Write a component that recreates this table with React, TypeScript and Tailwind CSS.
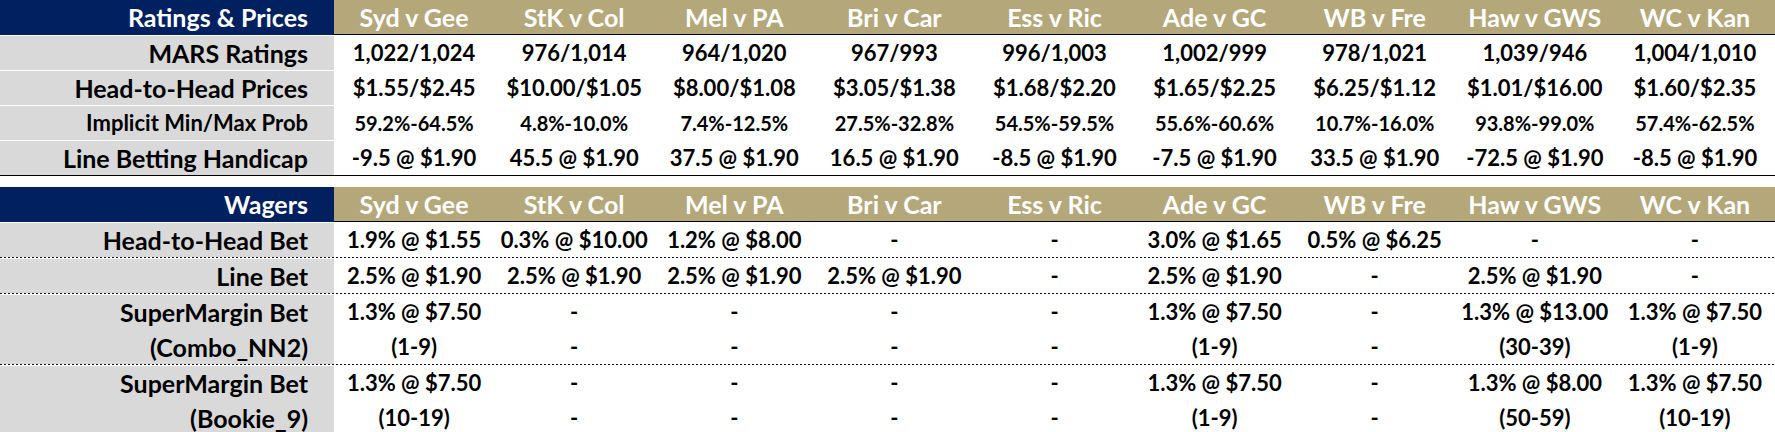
import React from 'react';

const matches = ['Syd v Gee', 'StK v Col', 'Mel v PA', 'Bri v Car', 'Ess v Ric', 'Ade v GC', 'WB v Fre', 'Haw v GWS', 'WC v Kan'];

const ratingRows: { label: string; small?: boolean; values: string[] }[] = [
  { label: 'MARS Ratings', values: ['1,022/1,024', '976/1,014', '964/1,020', '967/993', '996/1,003', '1,002/999', '978/1,021', '1,039/946', '1,004/1,010'] },
  { label: 'Head-to-Head Prices', values: ['$1.55/$2.45', '$10.00/$1.05', '$8.00/$1.08', '$3.05/$1.38', '$1.68/$2.20', '$1.65/$2.25', '$6.25/$1.12', '$1.01/$16.00', '$1.60/$2.35'] },
  { label: 'Implicit Min/Max Prob', small: true, values: ['59.2%-64.5%', '4.8%-10.0%', '7.4%-12.5%', '27.5%-32.8%', '54.5%-59.5%', '55.6%-60.6%', '10.7%-16.0%', '93.8%-99.0%', '57.4%-62.5%'] },
  { label: 'Line Betting Handicap', values: ['-9.5 @ $1.90', '45.5 @ $1.90', '37.5 @ $1.90', '16.5 @ $1.90', '-8.5 @ $1.90', '-7.5 @ $1.90', '33.5 @ $1.90', '-72.5 @ $1.90', '-8.5 @ $1.90'] },
];

// each wager row can span one or two lines
const wagerRows: { lines: string[]; values: string[][] }[] = [
  { lines: ['Head-to-Head Bet'], values: [['1.9% @ $1.55', '0.3% @ $10.00', '1.2% @ $8.00', '-', '-', '3.0% @ $1.65', '0.5% @ $6.25', '-', '-']] },
  { lines: ['Line Bet'], values: [['2.5% @ $1.90', '2.5% @ $1.90', '2.5% @ $1.90', '2.5% @ $1.90', '-', '2.5% @ $1.90', '-', '2.5% @ $1.90', '-']] },
  {
    lines: ['SuperMargin Bet', '(Combo_NN2)'],
    values: [
      ['1.3% @ $7.50', '-', '-', '-', '-', '1.3% @ $7.50', '-', '1.3% @ $13.00', '1.3% @ $7.50'],
      ['(1-9)', '-', '-', '-', '-', '(1-9)', '-', '(30-39)', '(1-9)'],
    ],
  },
  {
    lines: ['SuperMargin Bet', '(Bookie_9)'],
    values: [
      ['1.3% @ $7.50', '-', '-', '-', '-', '1.3% @ $7.50', '-', '1.3% @ $8.00', '1.3% @ $7.50'],
      ['(10-19)', '-', '-', '-', '-', '(1-9)', '-', '(50-59)', '(10-19)'],
    ],
  },
];

const grid = 'grid grid-cols-[334px_repeat(9,minmax(0,1fr))]';

const Dotted: React.FC = () => (
  <div className="h-px bg-[image:repeating-linear-gradient(90deg,#111_0_2px,transparent_2px_4px)]" />
);

const HeaderRow: React.FC<{ title: string }> = ({ title }) => (
  <div className={`${grid} h-[35px] text-[25px] text-white`}>
    <div className="flex items-center justify-end bg-[#002060] pr-[26px]">{title}</div>
    {matches.map((m) => (
      <div key={m} className="flex items-center justify-center border-b border-black bg-[#b4a87b]">
        {m}
      </div>
    ))}
  </div>
);

const Line: React.FC<{ label: string; values: string[]; small?: boolean }> = ({ label, values, small }) => (
  <div className={`${grid} h-[34px]`}>
    <div className={`flex items-center justify-end bg-[#d9d9d9] pr-[26px] ${small ? 'text-[22px]' : 'text-[25px]'}`}>
      {label}
    </div>
    {values.map((v, i) => (
      <div key={i} className={`flex items-center justify-center ${small ? 'text-[20px]' : 'text-[22px]'}`}>
        {v}
      </div>
    ))}
  </div>
);

const App: React.FC = () => {
  return (
    <div className="h-[432px] w-[1775px] bg-white font-['Lato',sans-serif] font-bold leading-none text-black">
      <div className="border-b border-black">
        <HeaderRow title="Ratings & Prices" />
        {ratingRows.map((r) => (
          <div key={r.label} className="pt-px">
            <Line label={r.label} values={r.values} small={r.small} />
          </div>
        ))}
      </div>

      <div className="mt-[11px] border-b border-black">
        <HeaderRow title="Wagers" />
        {wagerRows.map((r, idx) => (
          <div key={idx}>
            {r.lines.map((label, j) => (
              <div
                key={j}
                className={j === 0 ? 'pt-px' : 'bg-[image:linear-gradient(90deg,#d9d9d9_334px,transparent_334px)] pt-px'}
              >
                <Line label={label} values={r.values[j]} />
              </div>
            ))}
            {idx < wagerRows.length - 1 && <Dotted />}
          </div>
        ))}
      </div>
    </div>
  );
};

export default App;
